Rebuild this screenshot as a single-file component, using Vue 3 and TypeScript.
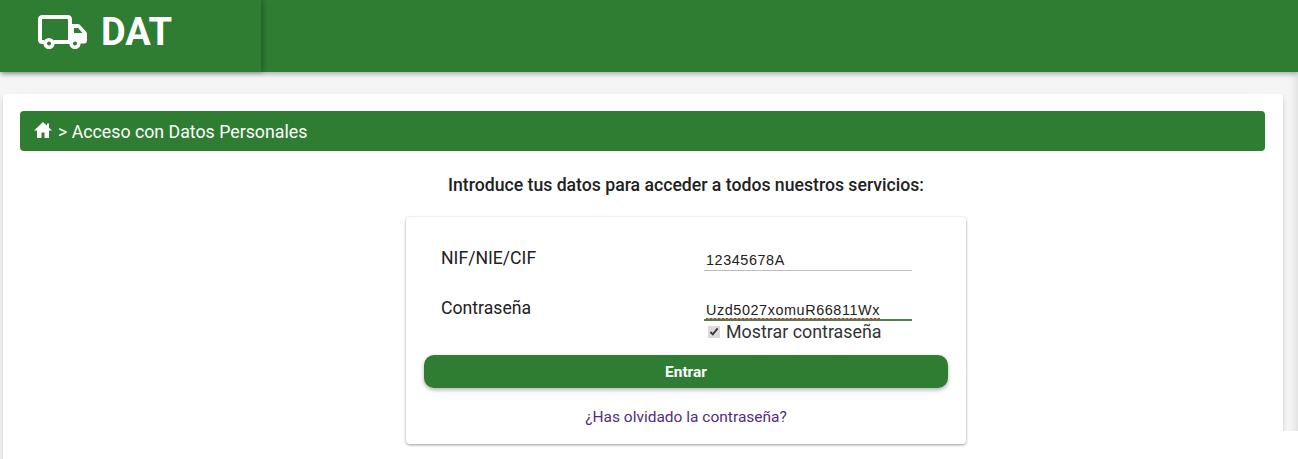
<script setup lang="ts">
import { ref } from 'vue'

const nif = ref('12345678A')
const password = ref('Uzd5027xomuR66811Wx')
const showPassword = ref(true)
</script>

<template>
  <div class="page">
    <header class="topbar">
      <div class="brand">
        <svg class="truck" viewBox="0 0 49 34" aria-hidden="true">
          <path fill="none" stroke="#fff" stroke-width="4" stroke-linejoin="round" d="M6 27H4.500Q2 27 2 24.500V4.500Q2 2 4.500 2H29.500Q32 2 32 4.500V27H16" />
          <path fill="#fff" d="M32 9H40Q41 9 42 10L48 16.500Q49 17.500 49 19V25.500Q49 28 46.500 28.500H32ZM36 13V18H44.500L40 13Z" />
          <circle cx="11" cy="28.500" r="3.800" fill="#2e7d32" stroke="#fff" stroke-width="3.600" />
          <circle cx="37" cy="28.500" r="3.800" fill="#2e7d32" stroke="#fff" stroke-width="3.600" />
        </svg>
        <span class="brand-name">DAT</span>
      </div>
    </header>

    <main class="content">
      <section class="panel">
        <div class="crumb">
          <svg class="home" viewBox="0 0 18 16" aria-hidden="true">
            <path fill="#fff" d="M9 0 0 8.500H3V16H7.500V10.500H10.500V16H15V8.500H18L15 5.700V1.500H13V3.800Z" />
          </svg>
          <span class="crumb-text">&gt; Acceso con Datos Personales</span>
        </div>

        <div class="body">
          <h2 class="lead">Introduce tus datos para acceder a todos nuestros servicios:</h2>

          <form class="login" @submit.prevent>
            <div class="row">
              <label class="row-label" for="nif">NIF/NIE/CIF</label>
              <div class="row-field">
                <input id="nif" v-model="nif" class="field" type="text" />
              </div>
            </div>
            <div class="row row-pass">
              <label class="row-label" for="pass">Contraseña</label>
              <div class="row-field">
                <div class="pass-wrap">
                  <input id="pass" v-model="password" class="field field-active" :type="showPassword ? 'text' : 'password'" spellcheck="false" />
                  <span class="squiggle"></span>
                </div>
                <label class="show">
                  <input v-model="showPassword" class="check" type="checkbox" />
                  <span>Mostrar contraseña</span>
                </label>
              </div>
            </div>
            <button class="submit" type="submit">Entrar</button>
            <a class="forgot" href="#">¿Has olvidado la contraseña?</a>
          </form>
        </div>
      </section>
    </main>
  </div>
</template>

<style>
html,
body {
  margin: 0;
  background: #fff;
  overflow: hidden;
}
</style>

<style scoped>
.page {
  height: 459px;
  font-family: Roboto, "Liberation Sans", sans-serif;
  color: #212121;
  overflow: hidden;
}

.topbar {
  position: relative;
  z-index: 2;
  height: 72px;
  background: #2e7d32;
  box-shadow: 0 2px 5px rgba(0, 0, 0, 0.3);
}

.brand {
  display: flex;
  align-items: center;
  gap: 14px;
  box-sizing: border-box;
  width: 261px;
  height: 72px;
  padding: 0 0 8px 38px;
  background: #2e7d32;
  box-shadow: 2px 0 5px rgba(0, 0, 0, 0.3);
}

.truck {
  width: 49px;
  height: 34px;
}

.brand-name {
  color: #fff;
  font-size: 38px;
  font-weight: 700;
  line-height: 1;
}

.content {
  position: relative;
  box-sizing: border-box;
  height: 387px;
  padding: 22px 15px 0 3px;
  background: #f5f5f5;
  box-shadow: inset -8px 0 8px -6px rgba(0, 0, 0, 0.1);
}

/* below the fold the grey side strip stops, only on the right */
.content::after {
  content: "";
  position: absolute;
  right: 0;
  bottom: 0;
  width: 15px;
  height: 28px;
  background: #fff;
}

.panel {
  box-sizing: border-box;
  height: 365px;
  padding: 17px 18px 0 17px;
  background: #fff;
  border-radius: 4px 4px 0 0;
  box-shadow: 0 3px 5px rgba(0, 0, 0, 0.16);
}

.crumb {
  display: flex;
  align-items: center;
  gap: 6px;
  height: 40px;
  padding-left: 14px;
  background: #2e7d32;
  border-radius: 4px;
  color: #fff;
  font-size: 17.750px;
}

.crumb-text {
  padding-top: 2px;
}

.home {
  width: 18px;
  height: 16px;
  margin-bottom: 2px;
}

.body {
  padding-left: 87px;
}

.lead {
  margin: 24px 0 0;
  font-size: 17.650px;
  font-weight: 500;
  line-height: 20px;
  text-align: center;
}

.login {
  box-sizing: border-box;
  width: 560px;
  height: 227px;
  margin: 22px auto 0;
  padding: 29px 18px 0;
  background: #fff;
  border-radius: 4px;
  box-shadow: 0 1px 3px rgba(0, 0, 0, 0.4);
}

.row {
  display: flex;
  height: 50px;
}

.row-label {
  box-sizing: border-box;
  width: 280px;
  padding-left: 17px;
  font-size: 17.650px;
  line-height: 24px;
}

.row-field {
  width: 208px;
  margin-top: -1px;
}

.pass-wrap {
  position: relative;
}

.field {
  display: block;
  box-sizing: border-box;
  width: 208px;
  height: 26px;
  padding: 5px 2px 0;
  border: 0;
  border-bottom: 1px solid #bdbdbd;
  outline: 0;
  background: transparent;
  color: #212121;
  font-family: "Liberation Sans", Arial, sans-serif;
  font-size: 14.400px;
  letter-spacing: 0.580px;
}

.field-active {
  border-bottom: 2px solid #4f7f50;
}

.squiggle {
  position: absolute;
  left: 2px;
  bottom: 2px;
  width: 174px;
  height: 1px;
  background: repeating-linear-gradient(90deg, #c0392b 0 2px, #d9a79f 2px 4px);
}

.show {
  display: flex;
  align-items: center;
  height: 21px;
  padding-left: 4px;
  font-size: 17.850px;
  color: #333;
}

.check {
  width: 12px;
  height: 12px;
  margin: 0 6px 0 0;
  accent-color: #dcdcdc;
}

.submit {
  display: block;
  width: 524px;
  height: 33px;
  margin-top: 9px;
  border: 0;
  border-radius: 10px;
  background: #2e7d32;
  color: #fff;
  font-family: inherit;
  font-size: 15.400px;
  font-weight: 700;
  box-shadow: 0 2px 4px rgba(0, 0, 0, 0.3);
}

.forgot {
  display: block;
  margin-top: 20px;
  color: #512d7c;
  font-size: 15.500px;
  line-height: 18px;
  text-align: center;
  text-decoration: none;
}
</style>
